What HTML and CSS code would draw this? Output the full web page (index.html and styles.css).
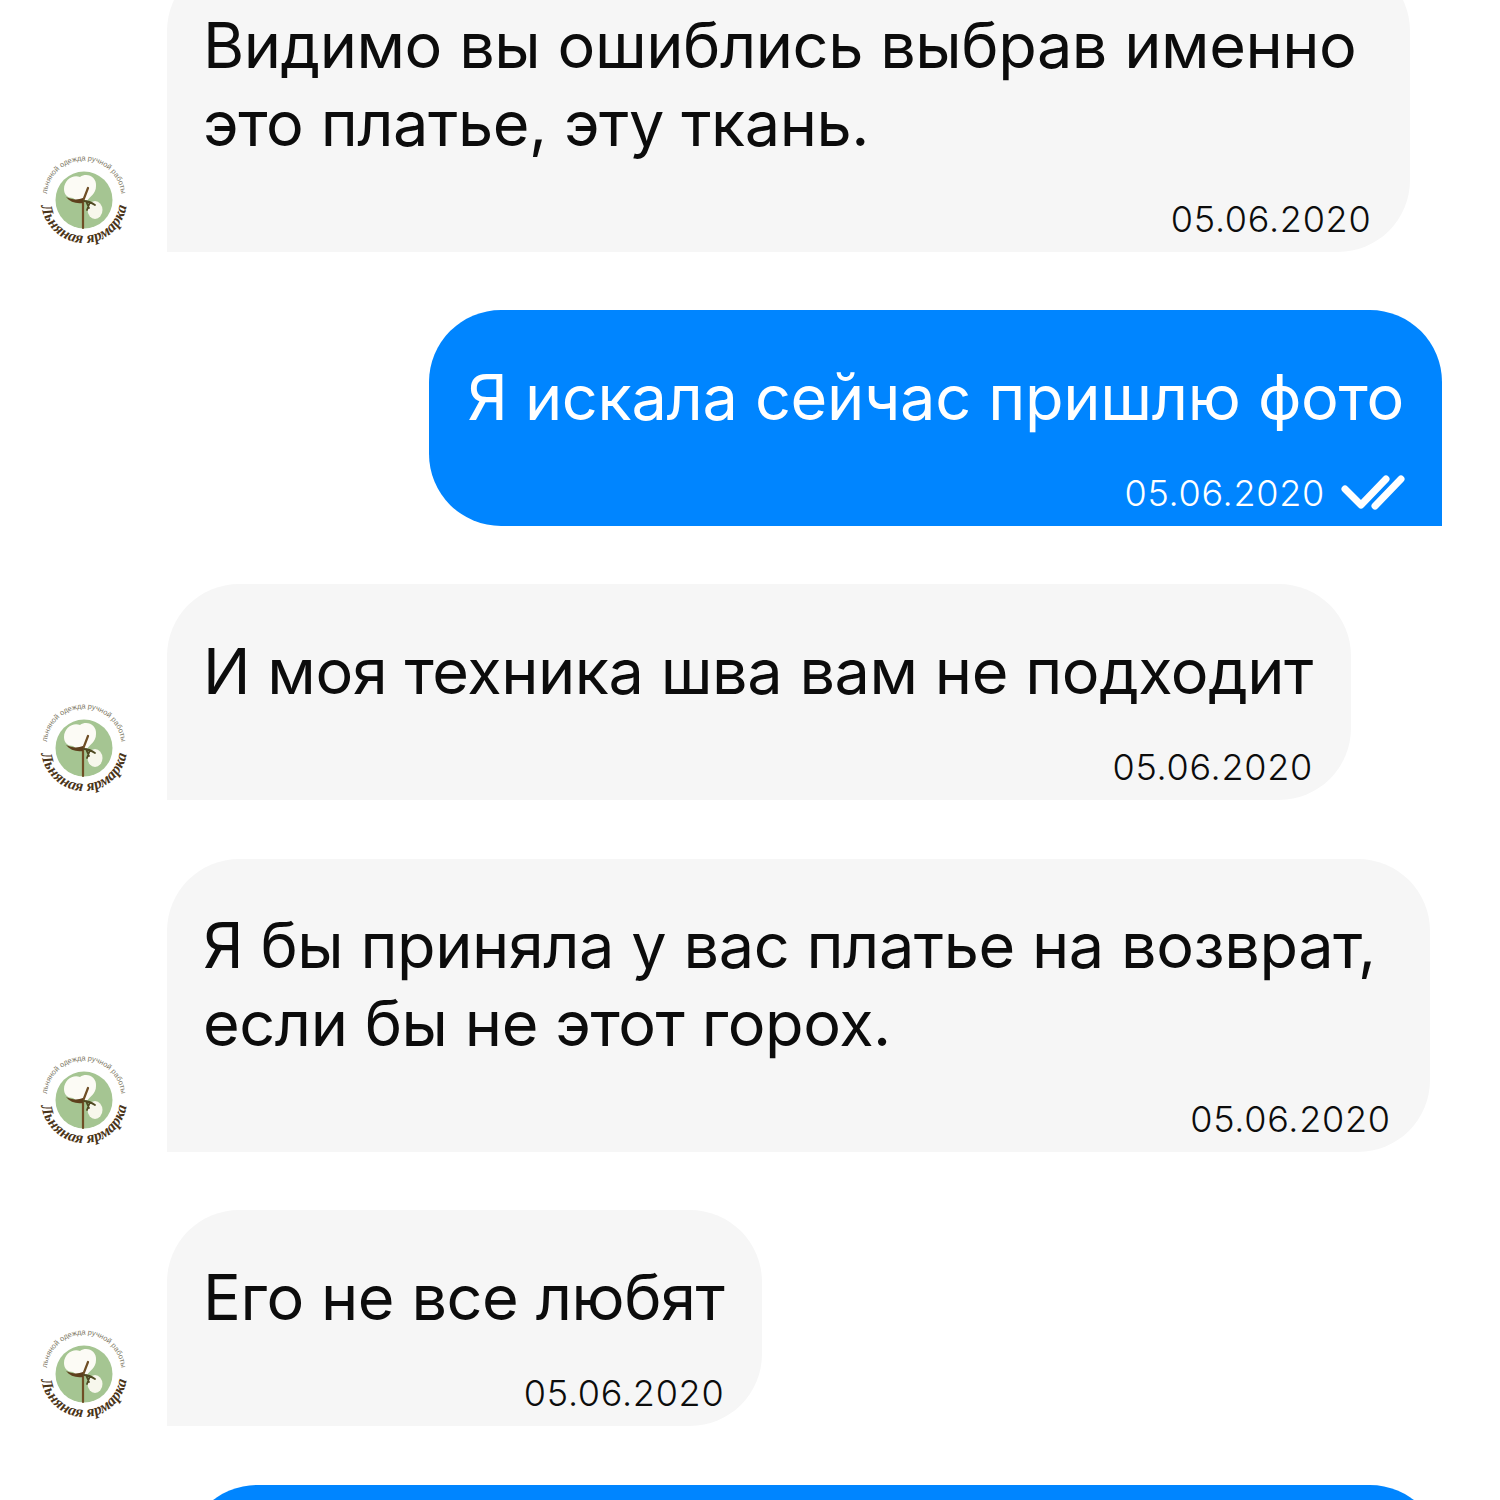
FILE: index.html
```html
<!DOCTYPE html>
<html lang="ru">
<head>
<meta charset="utf-8">
<title>Чат</title>
<link rel="stylesheet" href="styles.css">
</head>
<body>
<svg class="defs" width="0" height="0" aria-hidden="true">
  <defs>
    <path id="avTop" d="M7 50 A37.500 37.500 0 1 1 81 50"/>
    <path id="avBottom" d="M1 46 A43 43 0 0 0 87 46"/>
    <g id="av">
      <circle cx="44" cy="46" r="28.500" fill="#a5c592"/>
      <text class="logo-top"><textPath href="#avTop" startOffset="50%" text-anchor="middle">льняной одежда ручной работы</textPath></text>
      <text class="logo-bottom"><textPath href="#avBottom" startOffset="50%" text-anchor="middle">Льняная ярмарка</textPath></text>
      <path d="M24 35 C24 26 33 20 40 23 C47 18 57 23 56 32 C56 40 50 42 47 47 C41 49 36 47 33 44 C28 44 24 41 24 35Z" fill="#fcfbf5"/>
      <ellipse cx="55" cy="56" rx="7.500" ry="9" fill="#f7f7ec"/>
      <path d="M43 74 L43 47 M43 47 L48 34" fill="none" stroke="#6f4e25" stroke-width="2.200" stroke-linecap="round"/>
      <path d="M26 43 C32 46 38 46 43 44 L43 49 C36 50 30 48 26 43Z" fill="#5d3f1c"/>
      <path d="M44 47 C48 47 52 49 55 51 M46 47 L49 54 M50 48 L47 56" fill="none" stroke="#4f4a22" stroke-width="1.800" stroke-linecap="round"/>
    </g>
  </defs>
</svg>
<main class="chat">
  <div class="row">
    <svg class="avatar" viewBox="0 0 88 92" aria-hidden="true"><use href="#av"/></svg>
    <div class="bubble in wrap"><p class="text">Видимо вы ошиблись выбрав именно<br>это платье, эту ткань.</p><div class="meta">05.06.2020</div></div>
  </div>
  <div class="row out">
    <div class="bubble sent"><p class="text">Я искала сейчас пришлю фото</p><div class="meta">05.06.2020
      <svg class="ticks" viewBox="0 0 64 36" aria-hidden="true"><path d="M4 14 L20 30 L45 4 M34 31 L60 4"/></svg></div></div>
  </div>
  <div class="row">
    <svg class="avatar" viewBox="0 0 88 92" aria-hidden="true"><use href="#av"/></svg>
    <div class="bubble in"><p class="text">И моя техника шва вам не подходит</p><div class="meta">05.06.2020</div></div>
  </div>
  <div class="row">
    <svg class="avatar" viewBox="0 0 88 92" aria-hidden="true"><use href="#av"/></svg>
    <div class="bubble in wrap"><p class="text">Я бы приняла у вас платье на возврат,<br>если бы не этот горох.</p><div class="meta">05.06.2020</div></div>
  </div>
  <div class="row">
    <svg class="avatar" viewBox="0 0 88 92" aria-hidden="true"><use href="#av"/></svg>
    <div class="bubble in"><p class="text">Его не все любят</p><div class="meta">05.06.2020</div></div>
  </div>
  <div class="row out">
    <div class="bubble sent last"></div>
  </div>
</main>
</body>
</html>
```
FILE: styles.css
```css
html, body {
  margin: 0;
  padding: 0;
  height: 1500px;
  overflow: hidden;
  background: #fff;
}
.defs {
  position: absolute;
}
.chat {
  display: flex;
  flex-direction: column;
  gap: 58.6px;
  margin-top: -41.5px;
  padding: 0 58px 0 40px;
  font-family: Inter, "Liberation Sans", sans-serif;
}
.row {
  display: flex;
  align-items: flex-end;
  gap: 39px;
}
.row.out {
  justify-content: flex-end;
}
.avatar {
  width: 88px;
  height: 92px;
  flex: none;
  margin-bottom: 6px;
}
.bubble {
  box-sizing: border-box;
  padding: 48.5px 38px 11px;
  border-radius: 72px;
}
.bubble.in {
  background: #f6f6f6;
  color: #0c0c0c;
  padding-left: 36px;
  border-bottom-left-radius: 0;
}
.bubble.sent {
  background: #0085ff;
  color: #fff;
  border-bottom-right-radius: 0;
}
.bubble.sent .text {
  letter-spacing: -0.3px;
}
.bubble.wrap {
  padding-right: 54px;
}
.bubble.wrap .meta {
  margin-right: -15px;
}
.bubble.last {
  width: 1257px;
  height: 216px;
}
.text {
  margin: 0;
  font-size: 63px;
  line-height: 77.6px;
  letter-spacing: -0.44px;
  white-space: nowrap;
}
.meta {
  display: flex;
  justify-content: flex-end;
  align-items: center;
  gap: 16px;
  height: 44px;
  margin-top: 34.5px;
  font-size: 36px;
  font-weight: 300;
  line-height: 44px;
  letter-spacing: 0.72px;
}
.ticks {
  width: 64px;
  height: 36px;
  flex: none;
  margin-right: -1px;
}
.ticks path {
  fill: none;
  stroke: #fff;
  stroke-width: 7;
  stroke-linecap: round;
  stroke-linejoin: round;
}
.logo-top {
  font-family: "Liberation Sans", sans-serif;
  font-size: 7.4px;
  fill: #7d7763;
}
.logo-bottom {
  font-family: "Liberation Serif", serif;
  font-size: 15.5px;
  font-weight: bold;
  font-style: italic;
  letter-spacing: 0.3px;
  fill: #4a3418;
}
```
